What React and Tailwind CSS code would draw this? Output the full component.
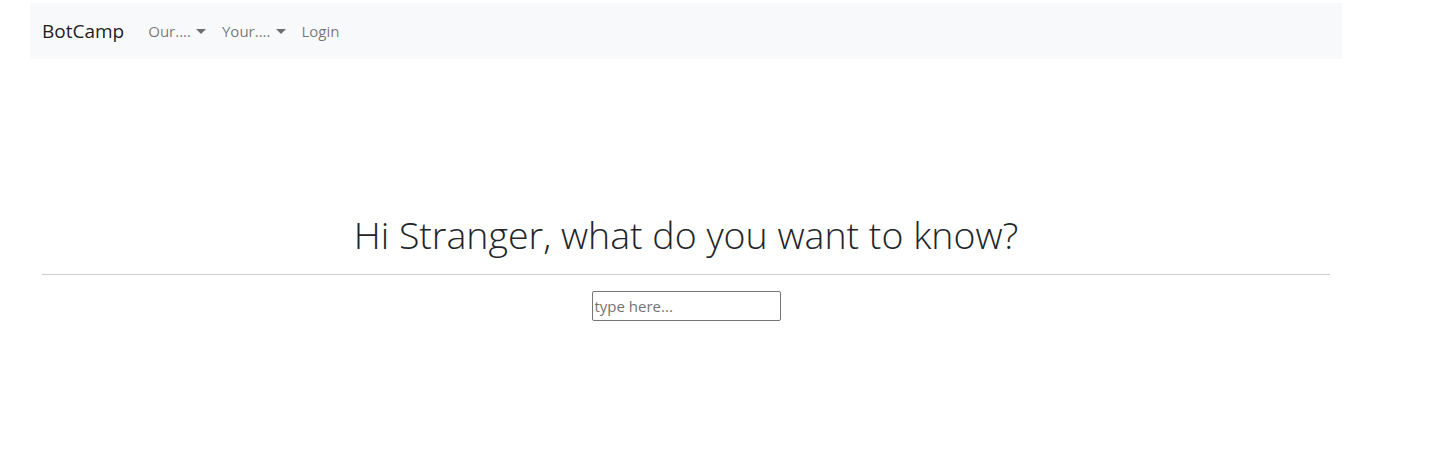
export default function App() {
  return (
    <div className="min-h-[451px] bg-white font-['Open_Sans',sans-serif] text-[#212529]">
      <nav className="ml-[30px] mt-[3px] flex h-[56px] w-[1312px] items-center bg-[#f8f9fa] px-3">
        <a className="mr-4 text-[19px] leading-[30px] text-[rgba(0,0,0,0.9)]">BotCamp</a>
        <ul className="flex items-center text-[15px] text-[rgba(0,0,0,0.55)]">
          <li className="flex items-center px-2">
            Our....
            <span className="ml-[5px] inline-block h-0 w-0 border-x-[5px] border-t-[5px] border-x-transparent border-t-[rgba(0,0,0,0.55)]" />
          </li>
          <li className="flex items-center px-2">
            Your....
            <span className="ml-[5px] inline-block h-0 w-0 border-x-[5px] border-t-[5px] border-x-transparent border-t-[rgba(0,0,0,0.55)]" />
          </li>
          <li className="px-2">Login</li>
        </ul>
      </nav>
      <main className="ml-[30px] w-[1312px] px-3 pt-[152px]">
        <h1 className="text-center text-[37.5px] font-light leading-[48px]">
          Hi Stranger, what do you want to know?
        </h1>
        <hr className="mt-[15px] border-t border-[#cccccc]" />
        <div className="mt-[16px] flex justify-center">
          <input
            type="text"
            placeholder="type here..."
            className="h-[30px] w-[189px] rounded-[2px] border border-[#767676] px-[2px] text-[15px] placeholder:text-[#757575] focus:outline-none"
          />
        </div>
      </main>
    </div>
  );
}
